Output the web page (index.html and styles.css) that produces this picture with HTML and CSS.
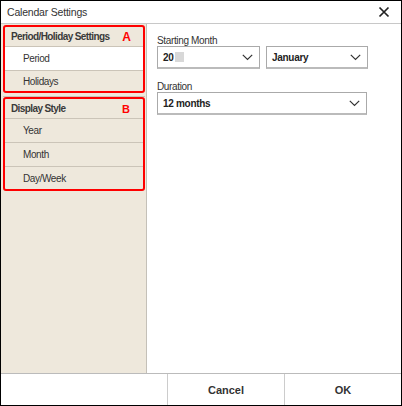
FILE: index.html
```html
<!DOCTYPE html>
<html>
<head>
<meta charset="utf-8">
<link rel="stylesheet" href="styles.css">
</head>
<body>
<div class="dialog">
  <div class="titlebar">
    <span class="title">Calendar Settings</span>
    <svg class="close" width="12" height="12" viewBox="0 0 12 12"><path d="M1.5 1.5 L10.5 10.5 M10.5 1.5 L1.5 10.5" stroke="#222" stroke-width="1.7" fill="none"/></svg>
  </div>
  <div class="main">
    <div class="sidebar">
      <div class="group group-a">
        <div class="row head">Period/Holiday Settings<span class="mark">A</span></div>
        <div class="row item selected">Period</div>
        <div class="row item last">Holidays</div>
      </div>
      <div class="divider"></div>
      <div class="group group-b">
        <div class="row head">Display Style<span class="mark">B</span></div>
        <div class="row item">Year</div>
        <div class="row item">Month</div>
        <div class="row item last">Day/Week</div>
      </div>
    </div>
    <div class="content">
      <div class="label">Starting Month</div>
      <div class="selects">
        <div class="select year"><span>20<i class="blur"></i></span><svg class="chev" width="11" height="7" viewBox="0 0 11 7"><path d="M0.8 0.8 L5.5 5.5 L10.2 0.8" stroke="#333" stroke-width="1.2" fill="none"/></svg></div>
        <div class="select month"><span>January</span><svg class="chev" width="11" height="7" viewBox="0 0 11 7"><path d="M0.8 0.8 L5.5 5.5 L10.2 0.8" stroke="#333" stroke-width="1.2" fill="none"/></svg></div>
      </div>
      <div class="label second">Duration</div>
      <div class="select duration"><span>12 months</span><svg class="chev" width="11" height="7" viewBox="0 0 11 7"><path d="M0.8 0.8 L5.5 5.5 L10.2 0.8" stroke="#333" stroke-width="1.2" fill="none"/></svg></div>
    </div>
  </div>
  <div class="footer">
    <div class="spacer"></div>
    <div class="btn">Cancel</div>
    <div class="btn">OK</div>
  </div>
</div>
</body>
</html>
```
FILE: styles.css
```css
* { box-sizing: border-box; }
html, body { margin: 0; padding: 0; background: #fff; }
body { font-family: "Liberation Sans", Arial, sans-serif; color: #333; }
.dialog {
  width: 402px; height: 406px;
  border: 1px solid #000;
  display: flex; flex-direction: column;
  background: #fff;
}
.titlebar {
  height: 23px;
  border-bottom: 1px solid #c8c8c8;
  display: flex; align-items: center; justify-content: space-between;
  padding: 0 11px 0 6px;
  flex: none;
}
.title { font-size: 10.5px; letter-spacing: -0.2px; color: #333; }
.close { display: block; }
.main { flex: 1; display: flex; min-height: 0; }
.sidebar {
  width: 146px;
  background: #eee8dc;
  border-right: 1px solid #c4c0b8;
  padding: 1px 1px 0 2px;
  flex: none;
}
.group {
  border: 2px solid #f00;
  border-radius: 3px;
  width: 142px;
}
.row {
  font-size: 10px;
  letter-spacing: -0.4px;
  color: #333;
  display: flex; align-items: center;
  border-bottom: 1px solid #cbc4b8;
}
.row.last { border-bottom: none; }
.head { height: 20px; padding-left: 6px; font-weight: bold; letter-spacing: -0.6px; color: #3a3a3a; position: relative; }
.item { height: 24px; padding-left: 18px; }
.group-a .item.last { height: 20px; }
.group-b .item.last { height: 22px; }
.selected { background: #fff; }
.mark {
  position: absolute; right: 12px; top: 3px;
  color: #f00; font-weight: bold; font-size: 12px; letter-spacing: 0;
}
.group-b .mark { right: 13px; top: 4px; font-size: 11px; }
.divider { height: 4px; border-bottom: 1px solid #cbc4b8; }
.content { flex: 1; padding: 12px 0 0 10px; }
.label { font-size: 10px; letter-spacing: -0.35px; color: #333; height: 10px; line-height: 10px; }
.label.second { margin-top: 13px; }
.selects { display: flex; gap: 6px; }
.select {
  height: 23px;
  border: 1px solid #aaa;
  border-bottom: 2px solid #bbb;
  display: flex; align-items: center; justify-content: space-between;
  padding: 0 6px 0 5px;
  font-size: 10px; font-weight: bold; letter-spacing: -0.3px; color: #222;
  background: #fff;
}
.select.year { width: 103px; }
.select.month { width: 102px; }
.select.duration { width: 210px; }
.select span { display: flex; align-items: center; }
.blur { display: inline-block; width: 9px; height: 10px; background: #d8d8d8; margin-left: 1px; }
.chev { display: block; }
.footer {
  height: 32px;
  border-top: 1px solid #bbb;
  display: flex; flex: none;
}
.spacer { width: 166px; }
.btn {
  width: 117px;
  border-left: 1px solid #ccc;
  display: flex; align-items: center; justify-content: center;
  font-size: 11px; font-weight: bold; color: #333;
}
```
